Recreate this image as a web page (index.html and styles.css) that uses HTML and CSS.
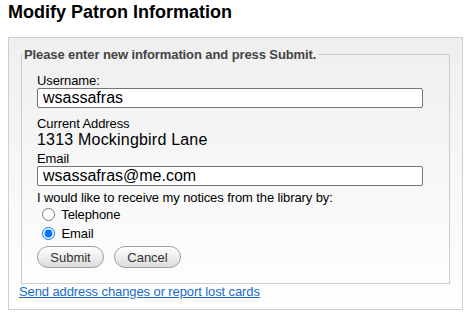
FILE: index.html
```html
<!DOCTYPE html>
<html lang="en">
<head>
    <meta charset="UTF-8">
    <title>Modify Patron Information</title>
    <link rel="stylesheet" href="styles.css">
</head>
<body>
    <h1 class="page-title">Modify Patron Information</h1>

    <div class="patron-box">
        <form class="patron-form">
            <fieldset>
                <legend>Please enter new information and press Submit.</legend>

                <div class="field">
                    <label for="username">Username:</label>
                    <input type="text" id="username" name="username" value="wsassafras">
                </div>

                <div class="field field-address">
                    <div class="field-label">Current Address</div>
                    <div class="address">1313 Mockingbird Lane</div>
                </div>

                <div class="field field-email">
                    <label for="email">Email</label>
                    <input type="text" id="email" name="email" value="wsassafras@me.com">
                </div>

                <div class="field field-notice">
                    <div class="field-label">I would like to receive my notices from the library by:</div>
                    <div class="radio-row">
                        <input type="radio" id="noticePhone" name="notice">
                        <label for="noticePhone">Telephone</label>
                    </div>
                    <div class="radio-row">
                        <input type="radio" id="noticeEmail" name="notice" checked>
                        <label for="noticeEmail">Email</label>
                    </div>
                </div>

                <div class="buttons">
                    <button type="submit" class="btn">Submit</button>
                    <button type="button" class="btn">Cancel</button>
                </div>
            </fieldset>
        </form>

        <a href="#" class="lost-cards">Send address changes or report lost cards</a>
    </div>
</body>
</html>
```

FILE: styles.css
```css
body {
    font-family: Arial, "Liberation Sans", sans-serif;
    margin: 0 8px;
    color: #000;
}

.page-title {
    font-size: 18px;
    font-weight: bold;
    line-height: 21px;
    margin: 2px 0 14px;
}

.patron-box {
    border: 1px solid #cfcfcf;
    background: linear-gradient(#efefef, #ffffff);
    padding: 9px 12px 10px 11px;
    height: 252px;
}

.patron-form {
    margin: 0;
}

fieldset {
    margin: 0 0 0 1px;
    border: 1px solid #cccccc;
    padding: 11px 15px 15px;
}

legend {
    font-size: 13px;
    font-weight: bold;
    line-height: 15px;
    letter-spacing: -0.1px;
    color: #444;
    padding: 0 2px;
    margin-left: -15px;
}

.field {
    font-size: 13px;
    letter-spacing: -0.1px;
}

.field label,
.field-label {
    display: block;
    line-height: 15px;
}

.field input[type="text"] {
    box-sizing: border-box;
    width: 386px;
    height: 20px;
    margin: 0;
    padding: 0 5px;
    border: 1px solid #767676;
    border-radius: 2px;
    font-family: Arial, "Liberation Sans", sans-serif;
    font-size: 16px;
    letter-spacing: 0;
    color: #000;
    background: white;
}

.field-address {
    margin-top: 8px;
}

.address {
    font-size: 16px;
    line-height: 18px;
    letter-spacing: 0.2px;
}

.field-email {
    margin-top: 2px;
}

.field-notice {
    margin-top: 4px;
}

.radio-row {
    line-height: 19px;
    height: 19px;
}

.radio-row:first-of-type {
    margin-top: 1px;
}

.radio-row input {
    margin: 3px 3px 0 5px;
    vertical-align: top;
}

.radio-row label {
    display: inline;
}

.buttons {
    display: flex;
    gap: 10px;
    margin-top: 3px;
}

.btn {
    width: 67px;
    height: 22px;
    padding: 0;
    border: 1px solid #a0a0a0;
    border-radius: 11px;
    background: linear-gradient(#ffffff, #dcdcdc);
    font-family: Arial, "Liberation Sans", sans-serif;
    font-size: 13px;
    color: #333;
    cursor: pointer;
}

.lost-cards {
    display: block;
    margin-left: -1px;
    font-size: 13px;
    line-height: 15px;
    letter-spacing: -0.1px;
    color: #1a6cc6;
}
```
